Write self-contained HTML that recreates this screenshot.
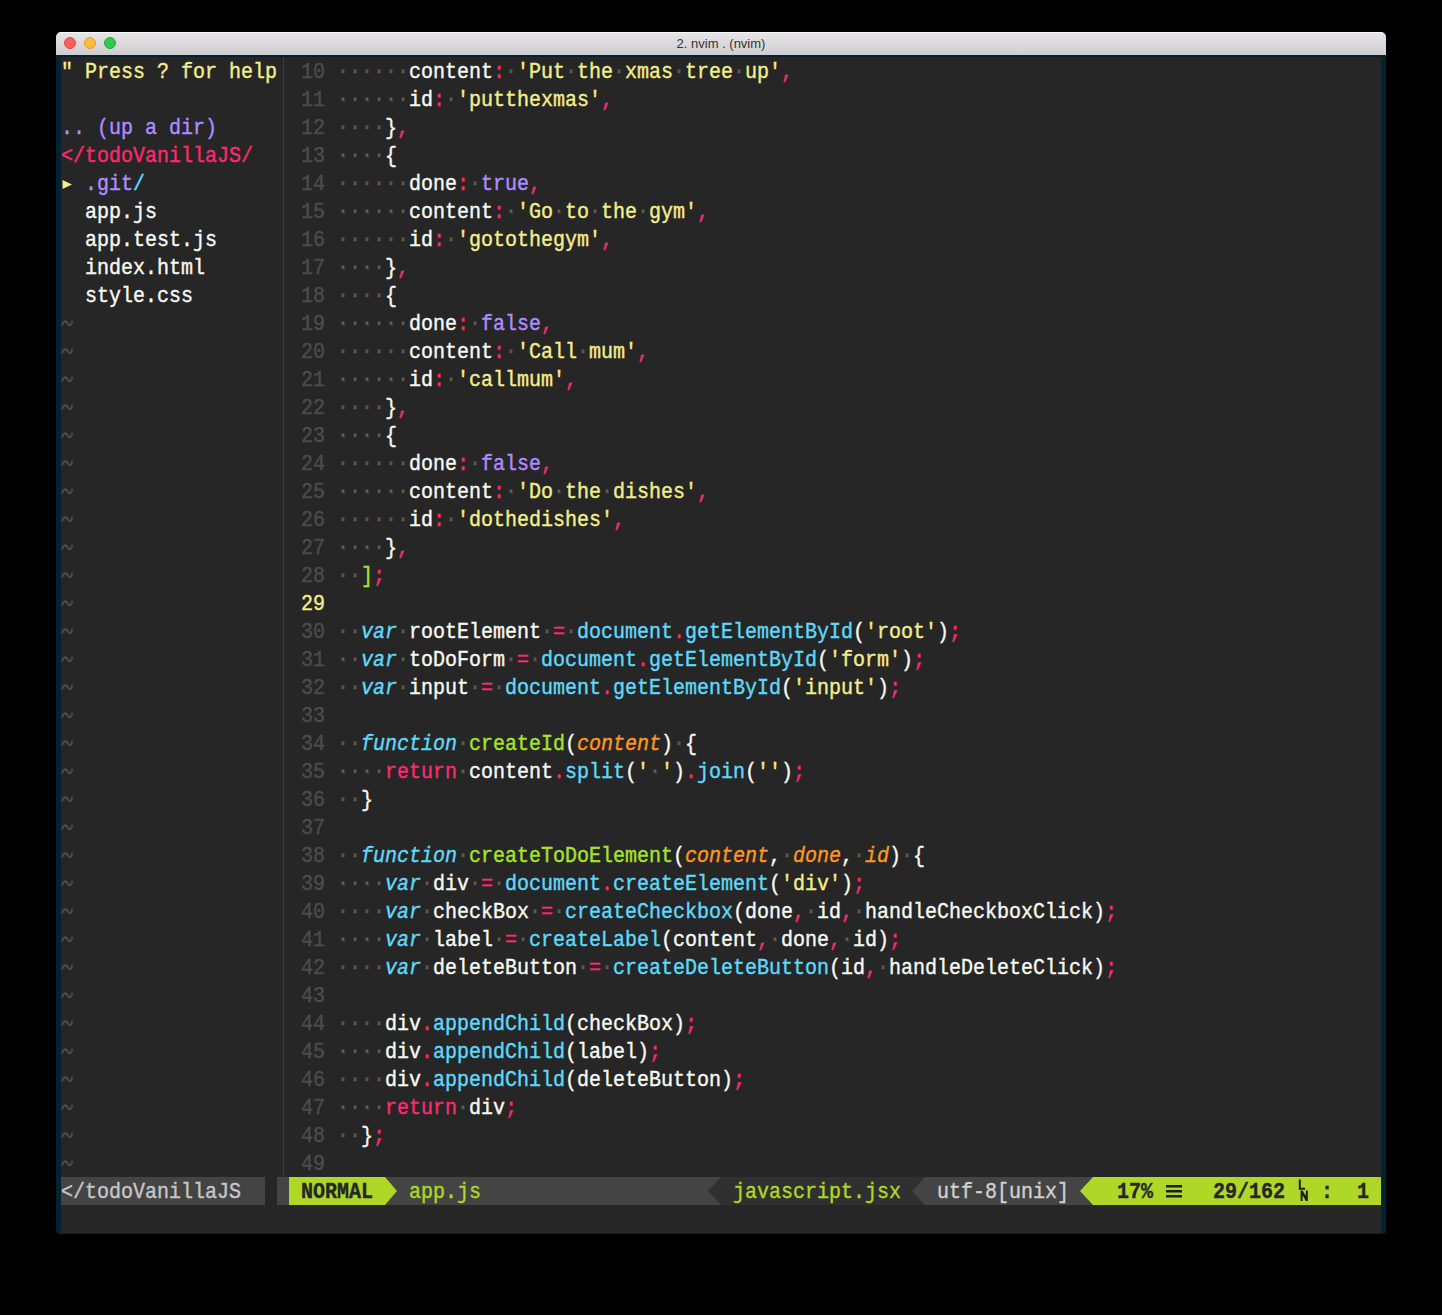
<!DOCTYPE html>
<html><head><meta charset="utf-8">
<style>
html,body{margin:0;padding:0;}
body{width:1442px;height:1315px;background:#000;position:relative;overflow:hidden;}
.win{position:absolute;left:56px;top:32px;width:1330px;height:1202px;border-radius:5px 5px 4px 4px;overflow:hidden;background:#03232e;}
.title{position:absolute;left:0;top:0;width:1330px;height:23px;background:linear-gradient(#e6e4e6,#cfcdcf);border-top:1px solid #f6f6f6;box-sizing:border-box;}
.title .tt{position:absolute;left:0;right:0;top:3px;text-align:center;font:13px "Liberation Sans",sans-serif;color:#333;}
.dot3{position:absolute;top:4px;width:12px;height:12px;border-radius:50%;box-sizing:border-box;}
.term{position:absolute;left:5px;top:25px;width:1320px;height:1176px;background:#262626;font-family:"Liberation Mono",monospace;font-size:22px;line-height:28px;white-space:pre;color:#f8f8f2;-webkit-text-stroke:0.4px currentColor;}
.row{position:absolute;left:0;height:28px;width:1500px;transform:scaleX(0.90894);transform-origin:0 0;}
.sep{position:absolute;left:222px;top:0;width:1px;height:1120px;background:#3c3c3c;}
.n{color:#4c4c4c;}
.ny{color:#f3ed8c;}
.d{color:#5a5a5a;}
.p{color:#fc2a6f;}
.y{color:#f3ed8c;}
.u{color:#b08cff;}
.c{color:#5fd8fa;}
.ci{color:#5fd8fa;font-style:italic;}
.g{color:#a6e22e;}
.oi{color:#fd971f;font-style:italic;}
.t{color:#4a4a4a;}
.status{position:absolute;left:0;top:1120px;width:1320px;height:28px;background:#262626;}
.seg{position:absolute;top:0;height:28px;}
.stx{position:absolute;top:2px;left:0;transform:scaleX(0.90894);transform-origin:0 0;}
.b{font-weight:bold;}
</style></head><body>
<div class="win">
 <div class="title">
  <div class="dot3" style="left:8px;background:#fc605c;border:1px solid #de4a46"></div>
  <div class="dot3" style="left:28px;background:#fdbc40;border:1px solid #dea034"></div>
  <div class="dot3" style="left:48px;background:#34c84a;border:1px solid #27aa36"></div>
  <div class="tt">2. nvim . (nvim)</div>
 </div>
 <div class="term">
<div class="row" style="top:2px"><span class="y">" Press ? for help</span> <span class="n"> 10</span> <span class="d">······</span>content<span class="p">:</span><span class="d">·</span><span class="y">'</span><span class="y">Put</span><span class="d">·</span><span class="y">the</span><span class="d">·</span><span class="y">xmas</span><span class="d">·</span><span class="y">tree</span><span class="d">·</span><span class="y">up</span><span class="y">'</span><span class="p">,</span></div>
<div class="row" style="top:30px">                   <span class="n"> 11</span> <span class="d">······</span>id<span class="p">:</span><span class="d">·</span><span class="y">'</span><span class="y">putthexmas</span><span class="y">'</span><span class="p">,</span></div>
<div class="row" style="top:58px"><span class="u">.. (up a dir)</span>      <span class="n"> 12</span> <span class="d">····</span>}<span class="p">,</span></div>
<div class="row" style="top:86px"><span class="p">&lt;/todoVanillaJS/</span>   <span class="n"> 13</span> <span class="d">····</span>{</div>
<div class="row" style="top:114px">  <span class="u">.git</span><span class="c">/</span>            <span class="n"> 14</span> <span class="d">······</span>done<span class="p">:</span><span class="d">·</span><span class="u">true</span><span class="p">,</span></div>
<div class="row" style="top:142px">  app.js           <span class="n"> 15</span> <span class="d">······</span>content<span class="p">:</span><span class="d">·</span><span class="y">'</span><span class="y">Go</span><span class="d">·</span><span class="y">to</span><span class="d">·</span><span class="y">the</span><span class="d">·</span><span class="y">gym</span><span class="y">'</span><span class="p">,</span></div>
<div class="row" style="top:170px">  app.test.js      <span class="n"> 16</span> <span class="d">······</span>id<span class="p">:</span><span class="d">·</span><span class="y">'</span><span class="y">gotothegym</span><span class="y">'</span><span class="p">,</span></div>
<div class="row" style="top:198px">  index.html       <span class="n"> 17</span> <span class="d">····</span>}<span class="p">,</span></div>
<div class="row" style="top:226px">  style.css        <span class="n"> 18</span> <span class="d">····</span>{</div>
<div class="row" style="top:254px">                   <span class="n"> 19</span> <span class="d">······</span>done<span class="p">:</span><span class="d">·</span><span class="u">false</span><span class="p">,</span></div>
<div class="row" style="top:282px">                   <span class="n"> 20</span> <span class="d">······</span>content<span class="p">:</span><span class="d">·</span><span class="y">'</span><span class="y">Call</span><span class="d">·</span><span class="y">mum</span><span class="y">'</span><span class="p">,</span></div>
<div class="row" style="top:310px">                   <span class="n"> 21</span> <span class="d">······</span>id<span class="p">:</span><span class="d">·</span><span class="y">'</span><span class="y">callmum</span><span class="y">'</span><span class="p">,</span></div>
<div class="row" style="top:338px">                   <span class="n"> 22</span> <span class="d">····</span>}<span class="p">,</span></div>
<div class="row" style="top:366px">                   <span class="n"> 23</span> <span class="d">····</span>{</div>
<div class="row" style="top:394px">                   <span class="n"> 24</span> <span class="d">······</span>done<span class="p">:</span><span class="d">·</span><span class="u">false</span><span class="p">,</span></div>
<div class="row" style="top:422px">                   <span class="n"> 25</span> <span class="d">······</span>content<span class="p">:</span><span class="d">·</span><span class="y">'</span><span class="y">Do</span><span class="d">·</span><span class="y">the</span><span class="d">·</span><span class="y">dishes</span><span class="y">'</span><span class="p">,</span></div>
<div class="row" style="top:450px">                   <span class="n"> 26</span> <span class="d">······</span>id<span class="p">:</span><span class="d">·</span><span class="y">'</span><span class="y">dothedishes</span><span class="y">'</span><span class="p">,</span></div>
<div class="row" style="top:478px">                   <span class="n"> 27</span> <span class="d">····</span>}<span class="p">,</span></div>
<div class="row" style="top:506px">                   <span class="n"> 28</span> <span class="d">··</span><span class="g">]</span><span class="p">;</span></div>
<div class="row" style="top:534px">                   <span class="ny"> 29</span> </div>
<div class="row" style="top:562px">                   <span class="n"> 30</span> <span class="d">··</span><span class="ci">var</span><span class="d">·</span>rootElement<span class="d">·</span><span class="p">=</span><span class="d">·</span><span class="c">document</span><span class="p">.</span><span class="c">getElementById</span>(<span class="y">'</span><span class="y">root</span><span class="y">'</span>)<span class="p">;</span></div>
<div class="row" style="top:590px">                   <span class="n"> 31</span> <span class="d">··</span><span class="ci">var</span><span class="d">·</span>toDoForm<span class="d">·</span><span class="p">=</span><span class="d">·</span><span class="c">document</span><span class="p">.</span><span class="c">getElementById</span>(<span class="y">'</span><span class="y">form</span><span class="y">'</span>)<span class="p">;</span></div>
<div class="row" style="top:618px">                   <span class="n"> 32</span> <span class="d">··</span><span class="ci">var</span><span class="d">·</span>input<span class="d">·</span><span class="p">=</span><span class="d">·</span><span class="c">document</span><span class="p">.</span><span class="c">getElementById</span>(<span class="y">'</span><span class="y">input</span><span class="y">'</span>)<span class="p">;</span></div>
<div class="row" style="top:646px">                   <span class="n"> 33</span> </div>
<div class="row" style="top:674px">                   <span class="n"> 34</span> <span class="d">··</span><span class="ci">function</span><span class="d">·</span><span class="g">createId</span>(<span class="oi">content</span>)<span class="d">·</span>{</div>
<div class="row" style="top:702px">                   <span class="n"> 35</span> <span class="d">····</span><span class="p">return</span><span class="d">·</span>content<span class="p">.</span><span class="c">split</span>(<span class="y">'</span><span class="d">·</span><span class="y">'</span>)<span class="p">.</span><span class="c">join</span>(<span class="y">'</span><span class="y">'</span>)<span class="p">;</span></div>
<div class="row" style="top:730px">                   <span class="n"> 36</span> <span class="d">··</span>}</div>
<div class="row" style="top:758px">                   <span class="n"> 37</span> </div>
<div class="row" style="top:786px">                   <span class="n"> 38</span> <span class="d">··</span><span class="ci">function</span><span class="d">·</span><span class="g">createToDoElement</span>(<span class="oi">content</span>,<span class="d">·</span><span class="oi">done</span>,<span class="d">·</span><span class="oi">id</span>)<span class="d">·</span>{</div>
<div class="row" style="top:814px">                   <span class="n"> 39</span> <span class="d">····</span><span class="ci">var</span><span class="d">·</span>div<span class="d">·</span><span class="p">=</span><span class="d">·</span><span class="c">document</span><span class="p">.</span><span class="c">createElement</span>(<span class="y">'</span><span class="y">div</span><span class="y">'</span>)<span class="p">;</span></div>
<div class="row" style="top:842px">                   <span class="n"> 40</span> <span class="d">····</span><span class="ci">var</span><span class="d">·</span>checkBox<span class="d">·</span><span class="p">=</span><span class="d">·</span><span class="c">createCheckbox</span>(done<span class="p">,</span><span class="d">·</span>id<span class="p">,</span><span class="d">·</span>handleCheckboxClick)<span class="p">;</span></div>
<div class="row" style="top:870px">                   <span class="n"> 41</span> <span class="d">····</span><span class="ci">var</span><span class="d">·</span>label<span class="d">·</span><span class="p">=</span><span class="d">·</span><span class="c">createLabel</span>(content<span class="p">,</span><span class="d">·</span>done<span class="p">,</span><span class="d">·</span>id)<span class="p">;</span></div>
<div class="row" style="top:898px">                   <span class="n"> 42</span> <span class="d">····</span><span class="ci">var</span><span class="d">·</span>deleteButton<span class="d">·</span><span class="p">=</span><span class="d">·</span><span class="c">createDeleteButton</span>(id<span class="p">,</span><span class="d">·</span>handleDeleteClick)<span class="p">;</span></div>
<div class="row" style="top:926px">                   <span class="n"> 43</span> </div>
<div class="row" style="top:954px">                   <span class="n"> 44</span> <span class="d">····</span>div<span class="p">.</span><span class="c">appendChild</span>(checkBox)<span class="p">;</span></div>
<div class="row" style="top:982px">                   <span class="n"> 45</span> <span class="d">····</span>div<span class="p">.</span><span class="c">appendChild</span>(label)<span class="p">;</span></div>
<div class="row" style="top:1010px">                   <span class="n"> 46</span> <span class="d">····</span>div<span class="p">.</span><span class="c">appendChild</span>(deleteButton)<span class="p">;</span></div>
<div class="row" style="top:1038px">                   <span class="n"> 47</span> <span class="d">····</span><span class="p">return</span><span class="d">·</span>div<span class="p">;</span></div>
<div class="row" style="top:1066px">                   <span class="n"> 48</span> <span class="d">··</span>}<span class="p">;</span></div>
<div class="row" style="top:1094px">                   <span class="n"> 49</span> </div>
<svg style="position:absolute;left:0;top:0" width="14" height="1120"><defs><path id="tl" d="M1.3 15.6C2.4 11.6 5 11.4 6.5 14S10 17.4 11 12.9" fill="none" stroke="#4a4a4a" stroke-width="2.2" stroke-linecap="round"/></defs><use href="#tl" y="252"/><use href="#tl" y="280"/><use href="#tl" y="308"/><use href="#tl" y="336"/><use href="#tl" y="364"/><use href="#tl" y="392"/><use href="#tl" y="420"/><use href="#tl" y="448"/><use href="#tl" y="476"/><use href="#tl" y="504"/><use href="#tl" y="532"/><use href="#tl" y="560"/><use href="#tl" y="588"/><use href="#tl" y="616"/><use href="#tl" y="644"/><use href="#tl" y="672"/><use href="#tl" y="700"/><use href="#tl" y="728"/><use href="#tl" y="756"/><use href="#tl" y="784"/><use href="#tl" y="812"/><use href="#tl" y="840"/><use href="#tl" y="868"/><use href="#tl" y="896"/><use href="#tl" y="924"/><use href="#tl" y="952"/><use href="#tl" y="980"/><use href="#tl" y="1008"/><use href="#tl" y="1036"/><use href="#tl" y="1064"/><use href="#tl" y="1092"/></svg>
  <svg style="position:absolute;left:1px;top:122px" width="12" height="12"><polygon points="0.5,1 10,5.5 0.5,10" fill="#f3ed8c"/></svg>
  <div class="sep"></div>
  <div class="status">
   <div class="seg" style="left:0;width:204px;background:#444"></div>
   <div class="seg" style="left:216px;width:1104px;background:#444"></div>
   <div class="seg" style="left:228px;width:96px;background:#afd728"></div>
   <svg class="seg" style="left:324px" width="12" height="28"><polygon points="0,0 12,14 0,28" fill="#afd728"/></svg>
   <div class="seg" style="left:660px;width:204px;background:#303030"></div>
   <svg class="seg" style="left:647px" width="13" height="28"><polygon points="13,0 0,14 13,28" fill="#303030"/></svg>
   <svg class="seg" style="left:851px" width="13" height="28"><polygon points="13,0 0,14 13,28" fill="#444"/></svg>
   <svg class="seg" style="left:1019px" width="13" height="28"><polygon points="13,0 0,14 13,28" fill="#afd728"/></svg>
   <div class="seg" style="left:1032px;width:288px;background:#afd728"></div>
   <div class="stx"><span style="color:#c6c6c6">&lt;/todoVanillaJS</span>     <span style="color:#262626;font-weight:bold">NORMAL</span>   <span style="color:#afd728">app.js</span>                     <span style="color:#afd728">javascript.jsx</span>   <span style="color:#d0d0d0">utf-8[unix]</span>    <span style="color:#262626;font-weight:bold">17%</span>     <span style="color:#262626;font-weight:bold">29/162</span>   <span style="color:#262626;font-weight:bold">:</span>  <span style="color:#262626;font-weight:bold">1</span></div>
   <svg style="position:absolute;left:1105px;top:0" width="20" height="28" fill="#1e1e1e"><rect x="0" y="8" width="16" height="2.5"/><rect x="0" y="13" width="16" height="2.5"/><rect x="0" y="18" width="16" height="2.5"/></svg>
   <svg style="position:absolute;left:1236px;top:0" width="12" height="28" fill="#1e1e1e"><path d="M1.8 2.4h2v8.3h4.2v2h-6.2z"/><path d="M3.6 13.5h2l3.3 5.5v-5.5h1.9v10.4h-1.9l-3.3-5.6v5.6h-2z"/></svg>
  </div>
 </div>
</div>
</body></html>
